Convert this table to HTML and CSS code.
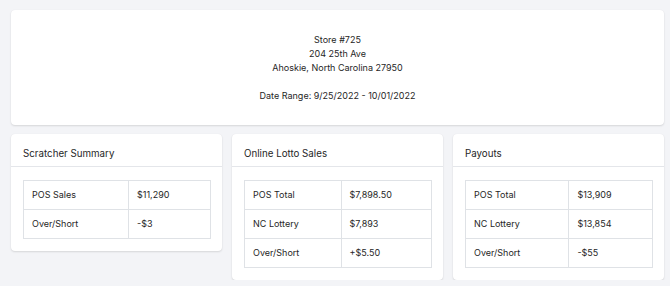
FILE: index.html
```html
<!DOCTYPE html>
<html>
<head>
<meta charset="utf-8">
<link rel="stylesheet" href="styles.css">
</head>
<body>
<div class="page">
  <section class="card store">
    <p class="addr">Store #725<br>204 25th Ave<br>Ahoskie, North Carolina 27950</p>
    <p class="range">Date Range: 9/25/2022 - 10/01/2022</p>
  </section>
  <div class="grid">
    <section class="card">
      <header class="card-head">Scratcher Summary</header>
      <div class="card-body">
        <table class="tbl">
          <tr><td>POS Sales</td><td>$11,290</td></tr>
          <tr><td>Over/Short</td><td>-$3</td></tr>
        </table>
      </div>
    </section>
    <section class="card">
      <header class="card-head">Online Lotto Sales</header>
      <div class="card-body">
        <table class="tbl">
          <tr><td>POS Total</td><td>$7,898.50</td></tr>
          <tr><td>NC Lottery</td><td>$7,893</td></tr>
          <tr><td>Over/Short</td><td>+$5.50</td></tr>
        </table>
      </div>
    </section>
    <section class="card">
      <header class="card-head">Payouts</header>
      <div class="card-body">
        <table class="tbl">
          <tr><td>POS Total</td><td>$13,909</td></tr>
          <tr><td>NC Lottery</td><td>$13,854</td></tr>
          <tr><td>Over/Short</td><td>-$55</td></tr>
        </table>
      </div>
    </section>
  </div>
</div>
</body>
</html>
```
FILE: styles.css
```css
html, body {
  margin: 0;
  padding: 0;
  background: #f3f4f7;
}
body {
  font-family: Inter, "Liberation Sans", sans-serif;
  color: #262626;
  font-size: 9px;
}
.page {
  padding: 10px 6px 0 11px;
  display: flex;
  flex-direction: column;
  gap: 9px;
}
.card {
  background: #fff;
  border-radius: 4px;
  box-shadow: 0 1px 2px rgba(0,0,0,0.12), 0 0 1px rgba(0,0,0,0.06);
}
.store {
  height: 115px;
  box-sizing: border-box;
  padding: 23px 0 0;
  text-align: center;
}
.store p {
  margin: 0;
  line-height: 14px;
}
.store .range {
  margin-top: 14px;
}
.grid {
  display: grid;
  grid-template-columns: repeat(3, 1fr);
  gap: 10px;
  align-items: start;
}
.card-head {
  height: 33px;
  box-sizing: border-box;
  padding: 13px 12px 0;
  font-size: 9.75px;
  line-height: 14px;
  border-bottom: 1px solid #e4e6ea;
}
.card-body {
  padding: 13px 11px 12px 12px;
}
.tbl {
  width: 100%;
  border-collapse: collapse;
}
.tbl td {
  border: 1px solid #dfe2e6;
  height: 29px;
  box-sizing: border-box;
  padding: 0 8px;
  line-height: 14px;
}
```
